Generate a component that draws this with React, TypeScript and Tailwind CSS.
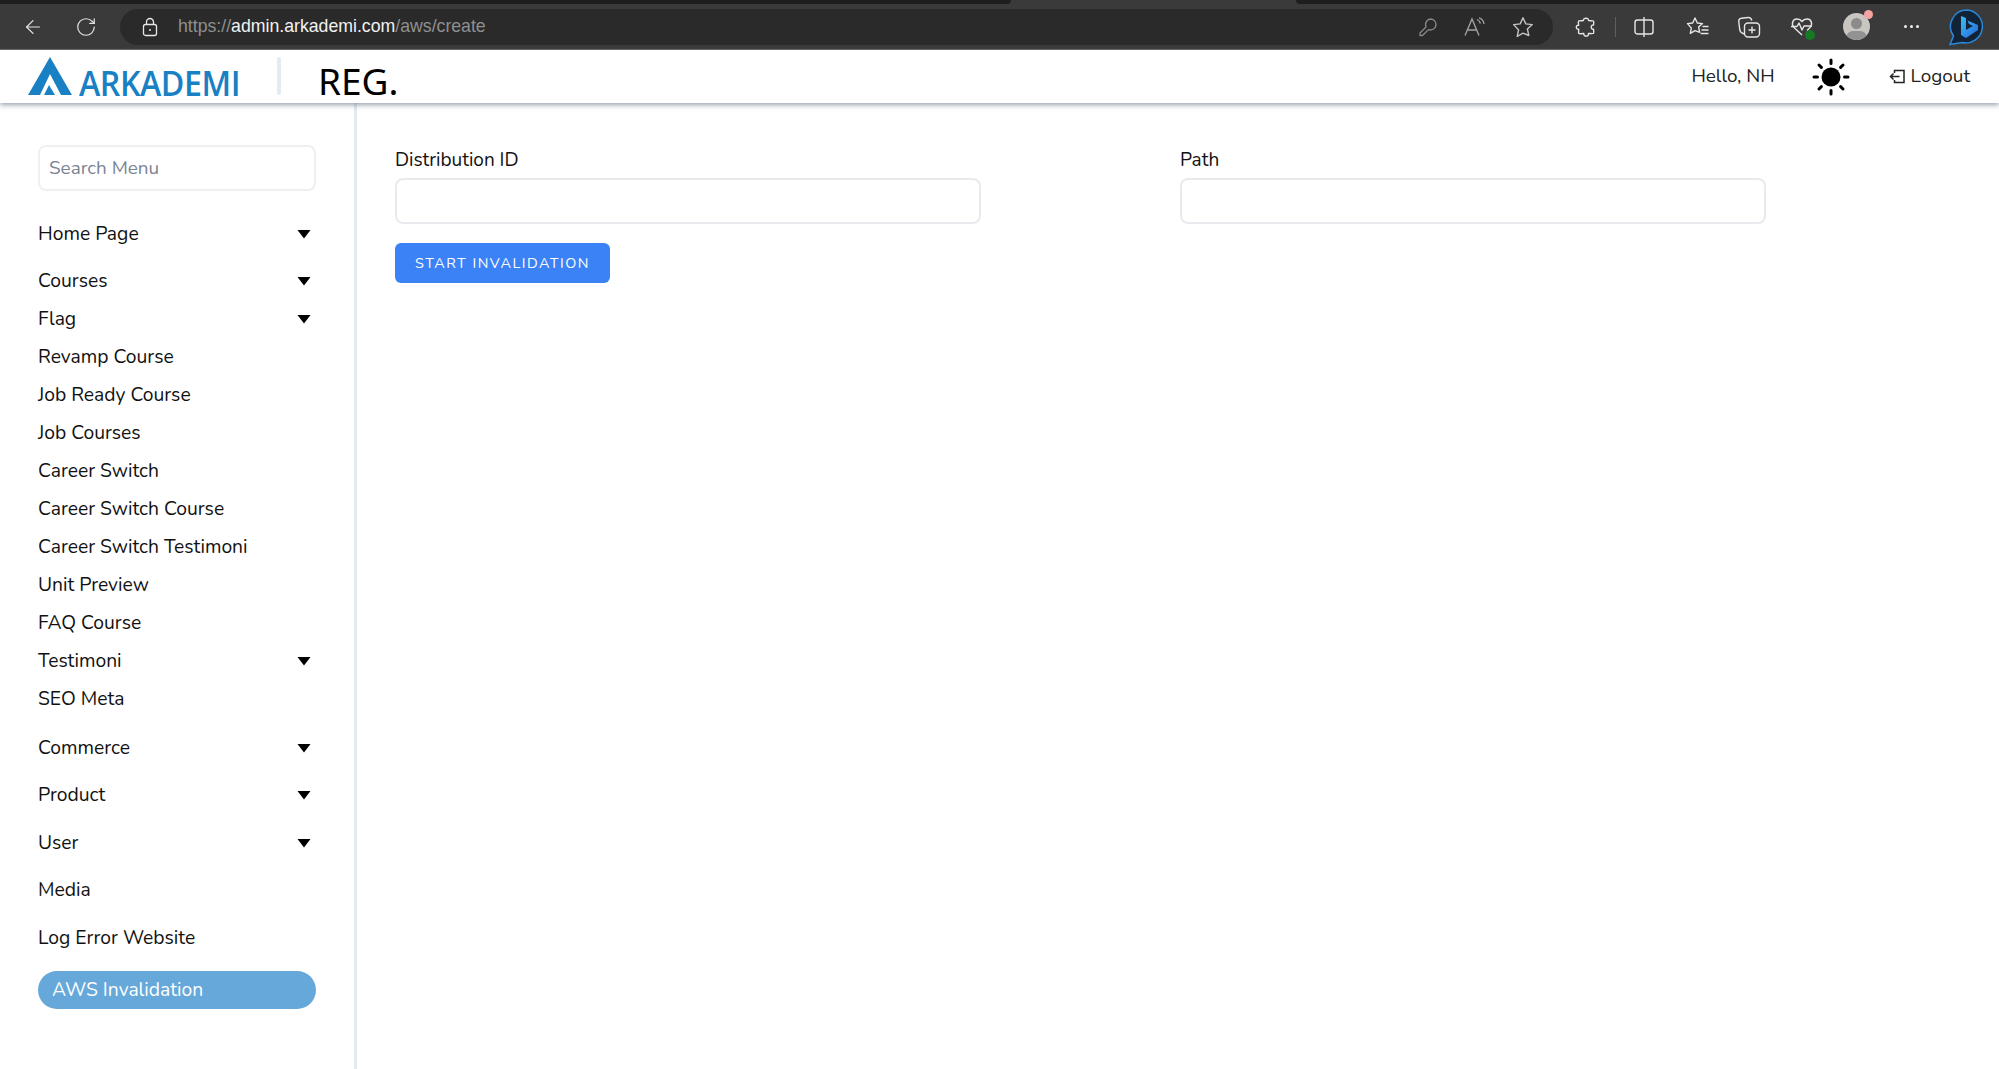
import React from "react";
import { ArrowLeft, RotateCw } from "lucide-react";

function Caret() {
  return (
    <svg width="14" height="10" viewBox="0 0 14 10" className="mr-[5px]">
      <path d="M0.5 1 H13.5 L7 9.5 Z" fill="#000" />
    </svg>
  );
}

function NavItem({ label, caret, h }: { label: string; caret?: boolean; h: string }) {
  return (
    <div className={`flex items-center justify-between text-[19.3px] text-[#111] ${h}`}>
      <span className="pt-[1px]">{label}</span>
      {caret ? <Caret /> : null}
    </div>
  );
}

function Sun() {
  return (
    <svg width="38" height="38" viewBox="0 0 38 38">
      <circle cx="19" cy="19" r="9.5" fill="#000" />
      <g stroke="#000" strokeWidth="3" strokeLinecap="round">
        <path d="M19 2v3.5M19 32.5v3.5M2 19h3.5M32.5 19h3.5M7 7l2.4 2.4M28.6 28.6L31 31M7 31l2.4-2.4M28.6 9.4L31 7" />
      </g>
    </svg>
  );
}

function BrowserBar() {
  return (
    <div className="h-[50px] bg-[#3a3a3a] flex flex-col shrink-0 border-b border-[#6a6a6a]">
      <div className="h-[4px] flex shrink-0">
        <div className="w-[1011px] bg-[#1e1e1e] rounded-br-md" />
        <div className="w-[285px]" />
        <div className="flex-1 bg-[#1e1e1e] rounded-bl-md" />
      </div>
      <div className="flex-1 flex items-center text-[#e6e6e6]">
        <ArrowLeft size={22} strokeWidth={1.3} className="ml-[22px]" />
        <RotateCw size={22} strokeWidth={1.3} className="ml-[31px]" />
        <div className="ml-[23px] w-[1433px] h-[36px] rounded-full bg-[#2a2a2a] flex items-center pl-[21px] pr-[19px]">
          <svg width="18" height="20" viewBox="0 0 18 20" fill="none" stroke="#e6e6e6" strokeWidth="1.3">
            <rect x="2.5" y="7.5" width="13" height="11" rx="2" />
            <path d="M5.5 7.5V5a3.5 3.5 0 0 1 7 0v2.5" />
            <circle cx="9" cy="13" r="1" fill="#e6e6e6" stroke="none" />
          </svg>
          <div
            className="ml-[19px] text-[17.7px] text-[#8f8f8f] flex-1"
            style={{ fontFamily: '"Liberation Sans", sans-serif' }}
          >
            https://<span className="text-[#f2f2f2]">admin.arkademi.com</span>/aws/create
          </div>
          <svg width="20" height="20" viewBox="0 0 20 20" fill="none" stroke="#8a8a8a" strokeWidth="1.3">
            <path d="M12.5 2a5.5 5.5 0 0 1 0 11c-.8 0-1.4-.1-2-.4L4.5 18.5H2V16l6-6c-.2-.6-.4-1.3-.4-2A5.5 5.5 0 0 1 12.5 2Z" strokeLinejoin="round" />
          </svg>
          <svg width="22" height="20" viewBox="0 0 22 20" fill="none" stroke="#a5a5a5" strokeWidth="1.3" className="ml-[26px]">
            <path d="M1 18.5 L8 2 L15 18.5M3.5 13h9" />
            <path d="M13 2.5c2 .7 3 2 3.4 4M15 .8c3 1 4.600 3 5 6" />
          </svg>
          <svg width="22" height="22" viewBox="0 0 22 22" fill="none" stroke="#c4c4c4" strokeWidth="1.4" className="ml-[26px]" strokeLinejoin="round">
            <path d="M11 1.800l2.800 6.100 6.500.7-4.900 4.400 1.400 6.500L11 17.200 5.200 20.500l1.400-6.500L1.700 8.600l6.500-.7Z" />
          </svg>
        </div>
        <svg width="24" height="24" viewBox="0 0 24 24" fill="none" stroke="#e6e6e6" strokeWidth="1.4" className="ml-[21px]" strokeLinejoin="round">
          <path d="M9.500 5.500C9 2.500 15 2.500 14.500 5.500c0 .6 4.500 0 5 .6.500.6 0 3.900 0 3.900-3-.8-3 5 0 4.200 0 0 .5 3.500 0 4.200-.5.600-4 0-5 .1.500 3.500-5 3.500-4.800 0-.2-.1-4.200.7-4.900-.1-.6-.7 0-4-.1-4.300C1.500 14.800 1.500 9.800 4.600 10.300c0-.4-.6-3.600 0-4.200.6-.6 4.900 0 4.900-.6Z" />
        </svg>
        <div className="ml-[17px] w-px h-[20px] bg-[#5f5f5f]" />
        <svg width="20" height="22" viewBox="0 0 20 22" fill="none" stroke="#e6e6e6" strokeWidth="1.4" className="ml-[18px]">
          <rect x="1" y="4" width="18" height="14" rx="2.500" />
          <path d="M10 1v20" />
        </svg>
        <svg width="24" height="24" viewBox="0 0 24 24" fill="none" stroke="#e6e6e6" strokeWidth="1.4" className="ml-[32px]" strokeLinejoin="round">
          <path d="M9 3l2.300 5 5.200.6-3.900 3.500 1.100 5.200L9 15.600 4.300 18.300l1.100-5.200L1.500 8.600l5.200-.6Z" />
          <path d="M16.500 11.500h6M15.500 15h7M14.500 18.500h8" />
        </svg>
        <svg width="24" height="24" viewBox="0 0 24 24" fill="none" stroke="#e6e6e6" strokeWidth="1.4" className="ml-[27px]">
          <path d="M7 19 L5 18 C3.500 17 3 16 2.800 15 L1.800 7 C1.600 5 2.800 3.500 4.500 3.300 L11 2.500 C13 2.300 14.300 3.300 14.800 5.500" />
          <rect x="7.500" y="8" width="15" height="14" rx="3.500" />
          <path d="M15 11.500v7M11.500 15h7" />
        </svg>
        <div className="ml-[29px] relative w-[24px] h-[24px]">
          <svg width="24" height="24" viewBox="0 0 24 24" fill="none" stroke="#e6e6e6" strokeWidth="1.4" strokeLinejoin="round">
            <path d="M12 20 L4 12.500 C1 9 2.500 4 7 4 C9 4 11 5 12 6.500 C13 5 15 4 17 4 C21.500 4 23 9 20 12.500 L17 15.500" />
            <path d="M1 11.500 H7 L9 8 L12 15 L14 11 H22" />
          </svg>
          <div className="absolute right-[-1px] bottom-[-1px] w-[10px] h-[10px] rounded-full bg-[#167a22]" />
        </div>
        <div className="ml-[28.500px] relative w-[27px] h-[27px]">
          <div className="absolute inset-0 rounded-full bg-[#c9c5c1] overflow-hidden">
            <div className="absolute left-[8px] top-[5px] w-[11px] h-[11px] rounded-full bg-[#8b8b8b]" />
            <div className="absolute left-[3px] top-[18px] w-[21px] h-[14px] rounded-full bg-[#929292]" />
          </div>
          <div className="absolute right-[-3px] top-[-3px] w-[9px] h-[9px] rounded-full bg-[#f5a3a3]" />
        </div>
        <div className="ml-[34px] flex gap-[2.500px]">
          <div className="w-[3.500px] h-[3.500px] rounded-full bg-[#efefef]" />
          <div className="w-[3.500px] h-[3.500px] rounded-full bg-[#efefef]" />
          <div className="w-[3.500px] h-[3.500px] rounded-full bg-[#efefef]" />
        </div>
        <svg width="38" height="38" viewBox="0 0 38 38" className="ml-[28px]">
          <defs>
            <linearGradient id="bing" x1="0" y1="0" x2="1" y2="1">
              <stop offset="0" stopColor="#37c0f2" />
              <stop offset="1" stopColor="#2a66de" />
            </linearGradient>
          </defs>
          <path d="M20 2 A16.500 16.500 0 1 1 15 34.500 L3 36.500 L6.500 28 A16.500 16.500 0 0 1 20 2 Z" fill="#122338" stroke="#2a88d8" strokeWidth="1.500" />
          <path d="M14 8 L19 10 V22 L26 18 L22 16 L20.500 12.500 L31 17 V22 L19 30 L14 27 Z" fill="url(#bing)" />
        </svg>
      </div>
    </div>
  );
}

function AppHeader() {
  return (
    <header className="relative z-10 h-[53px] bg-white flex items-center shrink-0 shadow-[0_2px_5px_rgba(70,85,110,0.55)]">
      <div className="w-[277px] pl-[28px] h-full flex items-end pb-[8px] gap-[7px]">
        <svg width="44" height="38" viewBox="0 0 44 38" className="shrink-0">
          <path fillRule="evenodd" d="M22 0 L44 38 H0 Z M22 17 L12 38 H16 L21 28 L27 38 H33 Z" fill="#1a80c4" />
        </svg>
        <div className="text-[35px] leading-[25px] h-[25px] text-[#1a80c4] font-semibold tracking-[-0.5px] origin-left scale-x-[0.92] font-['Open_Sans',sans-serif]">
          ARKADEMI
        </div>
      </div>
      <div className="w-[4px] h-[38px] rounded bg-[#e5e9f0] mb-[1px] shrink-0" />
      <div className="ml-[37px] text-[37px] leading-none text-black mt-[8px] font-['Noto_Sans',sans-serif]">REG.</div>
      <div className="flex-1" />
      <div className="text-[18.9px] text-[#222]">Hello, NH</div>
      <div className="ml-[37px]">
        <Sun />
      </div>
      <div className="ml-[39px] mr-[29px] flex items-center gap-[5px] text-[18.9px] text-[#222]">
        <svg width="17" height="17" viewBox="0 0 17 17" fill="none" stroke="#222" strokeWidth="1.5">
          <path d="M5.500 5V2.500H15V14.500H5.500V12" />
          <path d="M10.500 8.500H1.500M4.500 5.500l-3 3 3 3" />
        </svg>
        Logout
      </div>
    </header>
  );
}

function Sidebar() {
  return (
    <aside className="w-[357px] shrink-0 border-r-[3px] border-[#e5e9f0] pl-[38px] pr-[39px] pt-[42px] bg-white">
      <input
        placeholder="Search Menu"
        className="block w-[278px] h-[46px] px-[9px] rounded-lg border-2 border-[#eef0f3] text-[18.9px] placeholder:text-[#7b8494] outline-none"
      />
      <div className="mt-[19px] w-[278px]">
        <NavItem label="Home Page" caret h="h-[47px]" />
        <div className="pt-[5px] pb-[6px]">
          <NavItem label="Courses" caret h="h-[38px]" />
          <NavItem label="Flag" caret h="h-[38px]" />
          <NavItem label="Revamp Course" h="h-[38px]" />
          <NavItem label="Job Ready Course" h="h-[38px]" />
          <NavItem label="Job Courses" h="h-[38px]" />
          <NavItem label="Career Switch" h="h-[38px]" />
          <NavItem label="Career Switch Course" h="h-[38px]" />
          <NavItem label="Career Switch Testimoni" h="h-[38px]" />
          <NavItem label="Unit Preview" h="h-[38px]" />
          <NavItem label="FAQ Course" h="h-[38px]" />
          <NavItem label="Testimoni" caret h="h-[38px]" />
          <NavItem label="SEO Meta" h="h-[38px]" />
        </div>
        <NavItem label="Commerce" caret h="h-[47.5px]" />
        <NavItem label="Product" caret h="h-[47.5px]" />
        <NavItem label="User" caret h="h-[47.5px]" />
        <NavItem label="Media" h="h-[47.5px]" />
        <NavItem label="Log Error Website" h="h-[47.5px]" />
        <div className="mt-[9px] h-[38px] pt-[1px] rounded-full bg-[#65a8d9] text-white text-[19.3px] flex items-center px-[14px]">
          AWS Invalidation
        </div>
      </div>
    </aside>
  );
}

function Field({ label, className }: { label: string; className: string }) {
  return (
    <div className={`w-[586px] ${className}`}>
      <label className="block pt-[1px] text-[19px] leading-[24px] text-[#111]">{label}</label>
      <input className="mt-[6px] block w-full h-[46px] rounded-lg border-2 border-[#e8eaee] bg-white outline-none" />
    </div>
  );
}

export default function App() {
  return (
    <div className="h-[1069px] w-[1999px] overflow-hidden bg-white flex flex-col font-['Nunito','Noto_Sans','Open_Sans',sans-serif]">
      <BrowserBar />
      <AppHeader />
      <div className="flex flex-1 min-h-0">
        <Sidebar />
        <main className="flex-1 pl-[38px] pt-[44px]">
          <div className="flex">
            <Field label="Distribution ID" className="" />
            <Field label="Path" className="ml-[199px]" />
          </div>
          <button className="mt-[19px] w-[215px] h-[40px] pt-[1px] rounded-md bg-[#3b82f6] text-white text-[14.4px] tracking-[1.5px]">
            START INVALIDATION
          </button>
        </main>
      </div>
    </div>
  );
}
